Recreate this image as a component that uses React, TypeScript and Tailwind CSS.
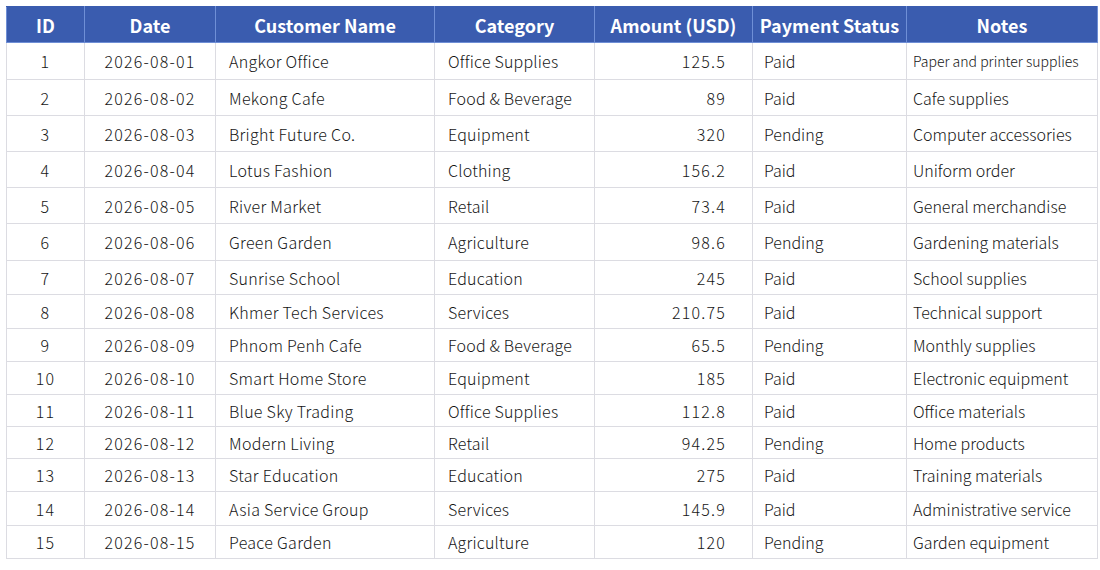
import React from "react";

type Row = {
  id: number;
  date: string;
  name: string;
  cat: string;
  amt: string;
  status: string;
  notes: string;
  h: string;
  small?: boolean;
};

const rows: Row[] = [
  { id: 1, date: "2026-08-01", name: "Angkor Office", cat: "Office Supplies", amt: "125.5", status: "Paid", notes: "Paper and printer supplies", h: "h-[37px]", small: true },
  { id: 2, date: "2026-08-02", name: "Mekong Cafe", cat: "Food & Beverage", amt: "89", status: "Paid", notes: "Cafe supplies", h: "h-[36px]" },
  { id: 3, date: "2026-08-03", name: "Bright Future Co.", cat: "Equipment", amt: "320", status: "Pending", notes: "Computer accessories", h: "h-[36px]" },
  { id: 4, date: "2026-08-04", name: "Lotus Fashion", cat: "Clothing", amt: "156.2", status: "Paid", notes: "Uniform order", h: "h-[36px]" },
  { id: 5, date: "2026-08-05", name: "River Market", cat: "Retail", amt: "73.4", status: "Paid", notes: "General merchandise", h: "h-[36px]" },
  { id: 6, date: "2026-08-06", name: "Green Garden", cat: "Agriculture", amt: "98.6", status: "Pending", notes: "Gardening materials", h: "h-[37px]" },
  { id: 7, date: "2026-08-07", name: "Sunrise School", cat: "Education", amt: "245", status: "Paid", notes: "School supplies", h: "h-[34px]" },
  { id: 8, date: "2026-08-08", name: "Khmer Tech Services", cat: "Services", amt: "210.75", status: "Paid", notes: "Technical support", h: "h-[34px]" },
  { id: 9, date: "2026-08-09", name: "Phnom Penh Cafe", cat: "Food & Beverage", amt: "65.5", status: "Pending", notes: "Monthly supplies", h: "h-[33px]" },
  { id: 10, date: "2026-08-10", name: "Smart Home Store", cat: "Equipment", amt: "185", status: "Paid", notes: "Electronic equipment", h: "h-[33px]" },
  { id: 11, date: "2026-08-11", name: "Blue Sky Trading", cat: "Office Supplies", amt: "112.8", status: "Paid", notes: "Office materials", h: "h-[32px]" },
  { id: 12, date: "2026-08-12", name: "Modern Living", cat: "Retail", amt: "94.25", status: "Pending", notes: "Home products", h: "h-[32px]" },
  { id: 13, date: "2026-08-13", name: "Star Education", cat: "Education", amt: "275", status: "Paid", notes: "Training materials", h: "h-[33px]" },
  { id: 14, date: "2026-08-14", name: "Asia Service Group", cat: "Services", amt: "145.9", status: "Paid", notes: "Administrative service", h: "h-[34px]" },
  { id: 15, date: "2026-08-15", name: "Peace Garden", cat: "Agriculture", amt: "120", status: "Pending", notes: "Garden equipment", h: "h-[33px]" },
];

const headers = ["ID", "Date", "Customer Name", "Category", "Amount (USD)", "Payment Status", "Notes"];

export default function App() {
  const td = "border border-[#dcdce2] p-0 align-middle";
  return (
    <div
      className="w-[1100px] h-[570px] bg-white pt-[6px] pl-[6px] text-[#161616]"
      style={{ fontFamily: '"Noto Sans CJK JP", "Noto Sans", sans-serif' }}
    >
      <table className="table-fixed border-collapse w-[1091px]">
        <colgroup>
          <col className="w-[78px]" />
          <col className="w-[131px]" />
          <col className="w-[219px]" />
          <col className="w-[160px]" />
          <col className="w-[158px]" />
          <col className="w-[154px]" />
          <col className="w-[191px]" />
        </colgroup>
        <thead>
          <tr className="h-[36px] bg-[#3a5caf]">
            {headers.map((h) => (
              <th
                key={h}
                className="border border-[#6f8fd6] border-t-[#3a5caf] p-0 text-center text-white font-bold text-[18px] leading-none whitespace-nowrap"
              >
                {h}
              </th>
            ))}
          </tr>
        </thead>
        <tbody className="text-[16px] leading-none font-light">
          {rows.map((r) => (
            <tr key={r.id} className={r.h}>
              <td className={`${td} text-center tracking-[1.2px]`}>{r.id}</td>
              <td className={`${td} text-center tracking-[1.2px]`}>{r.date}</td>
              <td className={`${td} pl-[13px] tracking-[0.3px]`}>{r.name}</td>
              <td className={`${td} pl-[13px] tracking-[0.2px]`}>{r.cat}</td>
              <td className={`${td} text-right pr-[26px] tracking-[1.2px]`}>{r.amt}</td>
              <td className={`${td} pl-[11px]`}>{r.status}</td>
              <td className={`${td} pl-[6px] whitespace-nowrap ${r.small ? "text-[14px]" : ""}`}>{r.notes}</td>
            </tr>
          ))}
        </tbody>
      </table>
    </div>
  );
}
